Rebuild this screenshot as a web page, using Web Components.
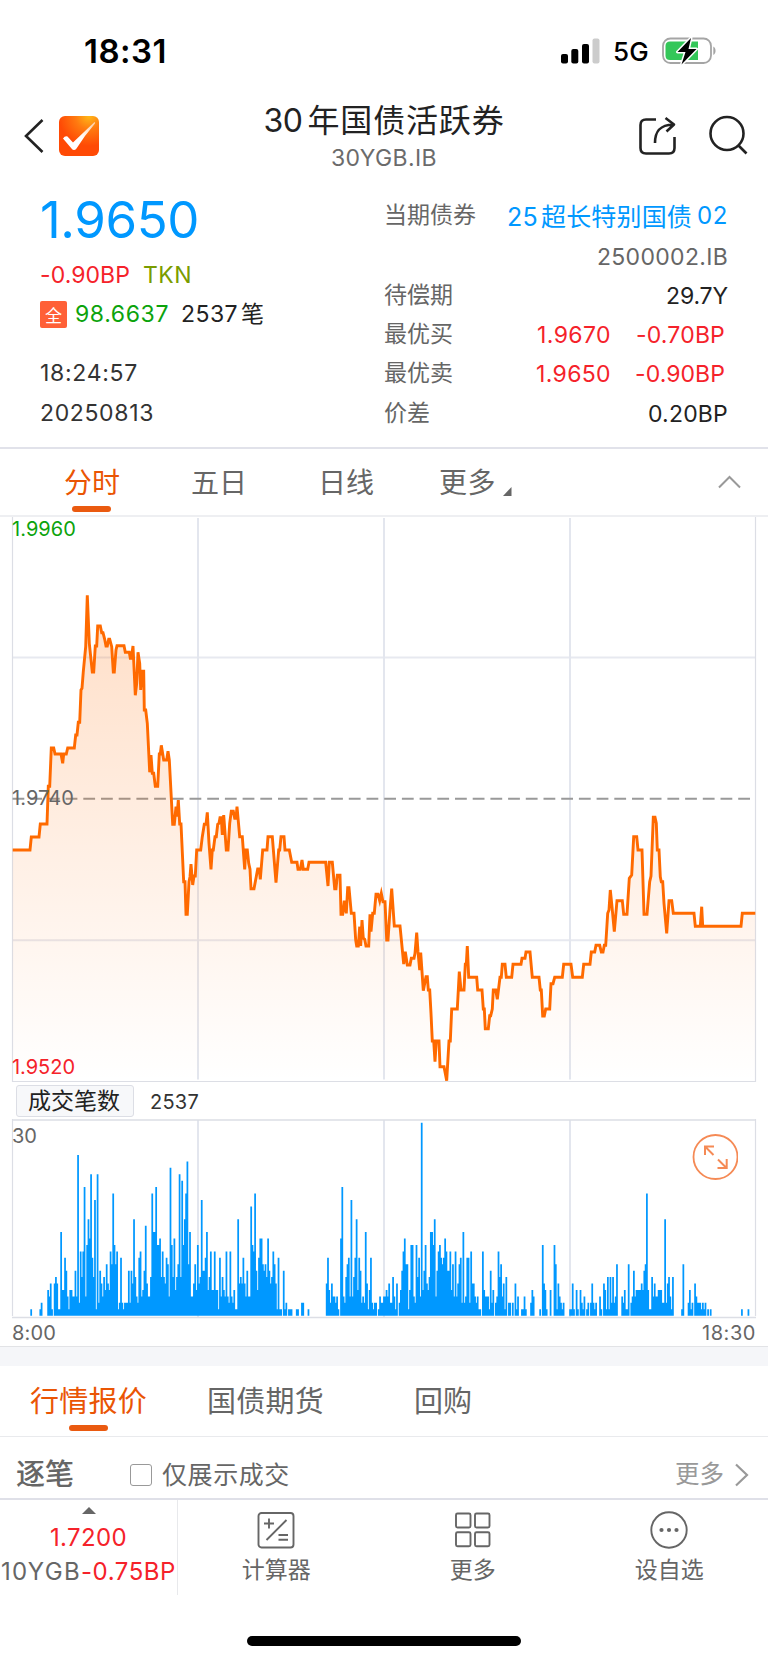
<!DOCTYPE html>
<html lang="zh-CN">
<head>
<meta charset="utf-8">
<title>30年国债活跃券</title>
<style>
html,body{margin:0;padding:0;background:#fff}
body{width:768px;height:1663px;overflow:hidden;font-family:Inter,"Noto Sans CJK SC",sans-serif;color:#222}
</style>
</head>
<body>
<bond-app></bond-app>
<script>
const define = (name, html, setup) => customElements.define(name, class extends HTMLElement {
  connectedCallback() {
    if (this.shadowRoot) return;
    const t = document.createElement('template');
    t.innerHTML = html;
    this.attachShadow({ mode: 'open' }).append(t.content.cloneNode(true));
    if (setup) setup(this, this.shadowRoot);
  }
});

define('bond-app', `
<style>:host{display:flex;flex-direction:column;width:768px;height:1663px;background:#fff;overflow:hidden}
.gap{height:19px;background:#f5f6f9;border-top:1px solid #e2e3e6;flex:none}</style>
<status-bar></status-bar>
<page-header></page-header>
<quote-summary></quote-summary>
<period-tabs></period-tabs>
<price-chart></price-chart>
<volume-head></volume-head>
<volume-chart></volume-chart>
<div class="gap"></div>
<market-tabs></market-tabs>
<tick-bar></tick-bar>
<bottom-bar></bottom-bar>
<home-indicator></home-indicator>`);

define('status-bar', `
<style>:host{display:flex;align-items:center;height:102px;flex:none;box-sizing:border-box;padding:0 52px 0 84px;color:#000}
.t{font-size:33px;font-weight:600;margin-right:auto;padding-top:1px}.g{font-size:26px;font-weight:450;margin:2px 13px 0 13px}svg{display:block;flex:none}</style>
<fit-text class="t" w="83">18:31</fit-text>
<svg width="40" height="26" viewBox="0 0 40 26"><rect x="1" y="16" width="7" height="9.5" rx="2"/><rect x="11.300" y="11" width="7" height="14.500" rx="2"/><rect x="22" y="6" width="7" height="19.500" rx="2"/><rect x="32.500" y="0.500" width="7" height="25" rx="2" fill="#ccc"/></svg>
<fit-text class="g" w="36">5G</fit-text>
<svg width="54" height="28" viewBox="0 0 54 28"><rect x="1" y="1.500" width="48" height="24.500" rx="7.500" fill="none" stroke="#a5a5a5" stroke-width="1.800"/><path d="M51.300 9.500c3 1.500 3 7 0 8.500z" fill="#a5a5a5"/><path d="M8 4.500h28v18.500H8q-4.500 0-4.500-4.500V9Q3.500 4.500 8 4.500z" fill="#34c759"/><path d="M29 1L15.500 15h8L19.500 27.500 34.500 12h-8z" fill="#000" stroke="#fff" stroke-width="3" paint-order="stroke" stroke-linejoin="round"/></svg>`);

define('page-header', `
<style>:host{display:grid;grid-template-columns:132px 1fr 132px;height:78px;flex:none;align-items:start}
.l{display:flex;padding:14px 0 0 22px;gap:14px}.c{display:flex;flex-direction:column;align-items:center;padding-top:1px}
.title{display:flex;height:37px;font-size:32px;gap:5px;align-items:center;color:#222}
.sub{font-size:23px;color:#6b6b6b;height:37px;display:flex;align-items:center}
.r{display:flex;gap:27px;padding:12px 0 0 0}svg{display:block;flex:none}</style>
<div class="l"><svg width="23" height="40" viewBox="0 0 23 40"><path d="M20.500 4L4 20 20.500 36" fill="none" stroke="#222" stroke-width="2.600"/></svg>
<svg width="40" height="40" viewBox="0 0 40 40"><defs><radialGradient id="o" cx=".75" cy="0" r=".75"><stop stop-color="#ffb918"/><stop offset=".45" stop-color="#ff7a10"/><stop offset="1" stop-color="#ff4a05"/></radialGradient><linearGradient id="w" x1="0" y1="1" x2="1" y2="0"><stop offset=".5" stop-color="#fff"/><stop offset="1" stop-color="#ffc99a"/></linearGradient></defs><rect width="40" height="40" rx="6" fill="url(#o)"/><path d="M4 22.500Q6 19.500 8.500 20.500L14 26.500Q25 16 35.500 6Q36.500 6 36 7.500Q26 19 17.500 32.500Q15 35.500 12.500 32.500Z" fill="url(#w)"/></svg></div>
<div class="c"><div class="title"><fit-text w="39">30</fit-text><fit-text w="197">年国债活跃券</fit-text></div><div class="sub"><fit-text w="106">30YGB.IB</fit-text></div></div>
<div class="r"><svg width="42" height="44" viewBox="0 0 42 44" fill="none" stroke="#222" stroke-width="2.600" stroke-linejoin="round"><path d="M20 5.500H10Q4.500 5.500 4.500 11V34Q4.500 39.500 10 39.500H33Q38.500 39.500 38.500 34V23"/><path d="M19 29C19 17 24 11 37 10.500M29.500 4L38 10.500 30.500 17.500"/></svg>
<svg width="44" height="44" viewBox="0 0 44 44" fill="none" stroke="#222" stroke-width="2.600"><circle cx="22" cy="19.500" r="16.500"/><path d="M33 31l8.500 8.500"/></svg></div>`);

define('quote-summary', `
<style>:host{display:grid;grid-template-columns:384px 344px;height:267px;flex:none;box-sizing:border-box;font-size:23px;color:#333}
.row{display:flex;align-items:center;height:39.4px}.price{height:80px;font-size:51px;color:#0098ff;display:flex;align-items:center;box-sizing:border-box}
.left{padding-left:40px}.red{color:#f5222a}.olive{color:#7a9c00;margin-left:13px}.green{color:#0ca30c;margin-left:8px}
.all{width:27px;height:27px;background:#ff6037;border-radius:2px;color:#fff;font-size:17px;display:flex;align-items:center;justify-content:center}
.n{color:#222;margin-left:12px}.bi{color:#222;margin-left:3px}
.right{padding-top:17px}.k{color:#666;margin-right:auto;position:relative;top:-1px}.link{color:#0098ff;font-size:25px}.dim{color:#666}.dark{color:#222}</style>
<div class="left">
<div class="price"><fit-text w="159">1.9650</fit-text></div>
<div class="row" style="margin-top:-4px;height:39px"><fit-text class="red" w="90">-0.90BP</fit-text><fit-text class="olive" w="49">TKN</fit-text></div>
<div class="row"><span class="all">全</span><fit-text class="green" w="94">98.6637</fit-text><fit-text class="n" w="57">2537</fit-text><fit-text class="bi" w="23">笔</fit-text></div>
<div class="row" style="margin-top:20px"><fit-text w="98">18:24:57</fit-text></div>
<div class="row"><fit-text w="114">20250813</fit-text></div>
</div>
<div class="right">
<div class="row"><fit-text class="k" w="92">当期债券</fit-text><fit-text class="link" w="31">25</fit-text><fit-text class="link" w="151" style="margin:0 5px 0 3px">超长特别国债</fit-text><fit-text class="link" w="31" style="font-size:24px">02</fit-text></div>
<div class="row" style="justify-content:flex-end;padding-top:2px"><fit-text class="dim" w="131">2500002.IB</fit-text></div>
<div class="row" style="margin-top:-1px"><fit-text class="k" w="69">待偿期</fit-text><fit-text class="dark" w="62">29.7Y</fit-text></div>
<div class="row"><fit-text class="k" w="69">最优买</fit-text><fit-text class="red" w="74">1.9670</fit-text><fit-text class="red" w="89" style="margin:0 3px 0 25px">-0.70BP</fit-text></div>
<div class="row"><fit-text class="k" w="69">最优卖</fit-text><fit-text class="red" w="75">1.9650</fit-text><fit-text class="red" w="90" style="margin:0 3px 0 24px">-0.90BP</fit-text></div>
<div class="row"><fit-text class="k" w="46">价差</fit-text><fit-text class="dark" w="80">0.20BP</fit-text></div>
</div>`);

define('tab-item', `
<style>:host{display:flex;flex-direction:column;align-items:center;flex:none;color:#666;height:100%;box-sizing:border-box;position:relative}
:host([active]){color:#ea5504}i{display:none;width:39px;height:6px;border-radius:3px;background:#ea5a10;position:absolute;bottom:var(--bar-bottom,3px)}
:host([active]) i{display:block}.t{height:100%;display:flex;align-items:center;padding-top:3px;box-sizing:border-box}</style><div class="t"><slot></slot></div><i></i>`);

define('period-tabs', `
<style>:host{display:flex;height:70px;flex:none;box-sizing:border-box;border-top:2px solid #e1e2ea;border-bottom:2px solid #eeeff2;font-size:28px;padding:0 27px 0 64px}
tab-item{margin-right:71px}svg{display:block;align-self:center}</style>
<tab-item active><fit-text w="56">分时</fit-text></tab-item><tab-item><fit-text w="56">五日</fit-text></tab-item><tab-item><fit-text w="56">日线</fit-text></tab-item>
<tab-item style="margin:0 7px 0 -6px"><fit-text w="57">更多</fit-text></tab-item>
<svg width="9" height="9" viewBox="0 0 9 9" style="margin-top:19px"><path d="M8.500 0V9H0z" fill="#666"/></svg>
<svg width="24" height="14" viewBox="0 0 24 14" style="margin-left:auto"><path d="M2 12.500L12.500 2 23 12.500" fill="none" stroke="#999" stroke-width="2"/></svg>`);

/* Price samples: each block has an origin in page pixels, samples are in thirds of a pixel. */
const PRICE = [
[0,510,'38,1020 90,1020 94,981 117,981 121,942 141,942 145,829 149,829 154,714 161,714 165,732 183,732 188,760 191,732 199,732 203,714 223,714 227,675 231,675 235,637 239,637 243,540 246,535 250,485 257,410 262,256 268,400 277,486 281,486 286,408 290,408 293,348 301,348 305,368 309,368 314,388 318,408 322,408 326,388 329,388 335,410 340,486 343,486 348,420 351,407 372,407 376,427 388,427 391,445 394,445 399,408 406,556 410,520 414,427 419,460 422,540 427,484 431,484 433,600 437,600 442,640 449,787 453,735 457,790 461,790 466,829 473,829 478,732 481,732 484,706 491,750 500,750 504,724 508,750 518,943 523,943 528,890 531,920 535,870 539,942 543,942 551,1115 555,1115 558,1213 562,1213 567,1115 570,1100 573,1062 578,1125 582,1098 586,1098 590,1020'],
[190,780,'32,210 37,170 43,133 48,133 52,97 57,190 63,268 67,210 70,210 75,170 79,170 83,133 87,130 90,113 94,113 97,165 101,105 109,210 114,210 119,130 124,94 130,94 134,115 138,115 141,80 149,170 157,170 164,268 167,210 172,210 176,250 180,268 183,326 192,326 203,267 208,267 211,298 218,210 231,210 234,170 247,170 258,308 266,210 269,210 273,170 282,170 285,210 298,210 305,247 321,247 324,268 331,268 336,240 340,268 353,268 357,247 407,247 414,318 418,247 427,247 434,326 438,326 442,286 450,286 453,403 458,403 463,362 469,400 473,323 477,323 484,400 492,400 497,480 500,498 505,498 509,440 512,498 516,420 520,475 524,478 528,498 536,498 540,403 543,455 548,400 553,400 558,343 564,343 569,362 574,340 579,365 585,365 590,480 594,480 600,390 605,326 613,438 630,438 635,490 641,552 646,515 652,555 660,555 664,535 672,535 675,520 680,458 684,515 689,570 692,518 700,632 708,590 712,590 715,630 719,630 723,700 727,783 731,783 735,845 739,783 747,783 750,860 762,860 770,902 777,783 781,783 785,687 802,687 808,575 813,630 822,630 826,553 829,553 832,498 836,592'],
[470,780,'20,592 23,630 36,630 40,687 43,687 46,746 55,746 59,707 62,707 67,687 70,630 77,630 82,658 90,592 94,592 97,553 105,553 109,592 125,592 129,553 153,553 156,535 165,535 168,516 180,516 187,592 207,592 211,630 214,630 218,708 223,708 227,687 239,687 243,611 249,611 254,592 277,592 281,553 303,553 308,592 337,592 341,553 360,553 364,516 374,516 378,496 389,496 394,516 399,516 403,496 407,496 413,400 417,390 421,330 426,380 433,455 441,362 457,362 461,403 471,403 478,295 485,285 491,170 500,170 504,210 516,210 522,403 531,403 539,305 543,288 550,112 555,112 559,130 562,210 567,210 571,290 574,305 578,305 582,370 590,460 597,362 605,362 610,400 672,400 676,439 691,439 695,380 698,439 813,439 817,400 856,400']];

define('price-chart', `
<style>:host{display:block;height:565px;flex:none;position:relative;font-size:20px}svg{display:block}
.l{position:absolute;left:12px;display:flex;align-items:center;height:24px}</style>
<svg width="768" height="565" viewBox="0 517 768 565"><defs><linearGradient id="f" gradientUnits="userSpaceOnUse" x1="0" y1="600" x2="0" y2="1081"><stop stop-color="#ff6a00" stop-opacity=".22"/><stop offset="1" stop-color="#ff6a00" stop-opacity="0"/></linearGradient></defs>
<g fill="none"><path d="M13 657.500H755M13 940.300H755" stroke="#e7e9f0" stroke-width="2"/><path d="M198 518V1079.500M384 518V1079.500M570 518V1079.500" stroke="#e3e6ee" stroke-width="2"/><path d="M12.500 517V1081.500H755.500V517" stroke="#dcdee5" stroke-width="1.200"/>
<path d="M12.500 798.700H755" stroke="#999" stroke-width="2" stroke-dasharray="11.800 5.900"/></g>
<path id="area" fill="url(#f)"/><path id="line" fill="none" stroke="#ff6a00" stroke-width="2.900" stroke-linejoin="miter" stroke-miterlimit="6"/></svg>
<div class="l" style="top:0;color:#0ca30c"><fit-text w="64">1.9960</fit-text></div>
<div class="l" style="top:269px;color:#666"><fit-text w="62">1.9740</fit-text></div>
<div class="l" style="top:538px;color:#f5222a"><fit-text w="63">1.9520</fit-text></div>`,
(host, root) => {
  const pts = PRICE.flatMap(([ox, oy, s]) => s.split(' ').map(p => {
    const [x, y] = p.split(',').map(Number);
    return (ox + x / 3).toFixed(1) + ' ' + (oy + y / 3).toFixed(1);
  }));
  root.getElementById('line').setAttribute('d', 'M' + pts.join('L'));
  root.getElementById('area').setAttribute('d', 'M12.700 1081L' + pts.join('L') + 'L755.300 1081Z');
});

define('volume-head', `
<style>:host{display:flex;align-items:center;height:37px;flex:none;padding-left:16px;color:#333;font-size:20px;gap:16px}
.b{width:116px;height:30px;border:1px solid #dcdee5;border-radius:3px;background:#f7f8fa;display:flex;align-items:center;justify-content:center;font-size:23px;color:#222}
fit-text{position:relative;top:1px}.b fit-text{left:-1px}</style>
<div class="b"><fit-text w="92">成交笔数</fit-text></div><fit-text w="49">2537</fit-text>`);

/* Deals per minute, 1.3 px per bar. */
const VOLUME = [
1,0,0,0,0,0,0,1,2,0,0,0,0,4,3,5,1,0,5,6,5,1,1,13,4,4,9,7,3,1,4,4,3,3,7,3,25,2,10,6,10,20,3,11,15,12,22,9,6,18,
1,22,2,7,5,3,6,4,8,5,4,10,8,19,11,8,10,1,2,9,2,1,2,2,2,7,2,7,5,15,6,3,2,9,10,3,4,7,14,5,3,3,6,19,13,13,20,11,11,12,
6,10,6,5,9,8,3,23,11,6,12,4,6,8,22,6,21,11,15,19,24,8,13,3,3,5,8,4,11,5,6,18,7,7,9,13,4,6,10,4,4,10,4,4,1,9,3,6,4,3,
10,3,2,10,3,2,4,1,1,15,5,6,5,9,5,3,7,3,3,17,11,10,19,7,4,9,12,12,8,7,8,6,12,7,5,6,10,8,5,1,9,1,1,0,7,1,2,0,1,1,
1,0,0,0,1,1,0,0,2,2,0,0,0,1,0,0,0,0,0,0,0,0,0,0,0,0,0,5,9,4,2,5,3,3,2,3,1,0,12,20,3,2,6,8,9,3,18,3,6,9,
15,4,9,7,2,3,2,13,5,1,4,9,2,1,2,2,0,1,3,2,2,3,3,4,3,5,2,2,6,3,1,5,0,2,4,7,10,12,8,8,1,4,11,11,3,2,11,6,9,3,
30,4,7,11,5,4,6,13,13,11,15,3,7,10,11,9,8,9,12,10,7,7,10,4,8,3,10,3,5,8,9,2,13,2,3,9,9,2,10,5,5,3,2,3,1,1,0,10,4,3,
3,3,1,7,2,4,0,2,3,10,6,8,3,5,1,6,0,2,2,0,2,0,5,1,3,0,0,1,1,3,1,0,0,0,2,4,3,0,0,0,0,1,0,11,5,4,1,0,0,4,
0,0,11,8,1,5,3,2,1,2,0,0,0,0,1,1,5,1,0,4,1,0,4,2,1,3,0,1,2,0,2,5,2,1,2,0,0,3,1,0,5,4,1,6,1,6,2,6,2,3,
8,0,0,0,3,2,4,1,1,8,0,2,3,7,3,4,4,4,4,5,4,7,8,19,4,1,1,6,3,5,3,3,4,4,4,2,2,15,2,5,6,3,1,6,0,0,0,0,0,0,
1,8,0,0,0,2,4,1,2,0,5,3,2,2,2,1,2,1,2,0,1,0,1,0,0,0,0,0,0,0,0,0,0,0,0,0,0,0,0,0,0,0,0,0,0,0,1,0,0,0,0,1];

define('volume-chart', `
<style>:host{display:block;height:227px;flex:none;position:relative;font-size:20px;color:#666}svg{display:block}
.m{position:absolute;left:12px;top:5px;height:24px;display:flex;align-items:center}.x{display:flex;justify-content:space-between;align-items:center;height:28px;padding:0 12px 0 12px}
.e{position:absolute;left:692px;top:15px}</style>
<svg width="768" height="200" viewBox="0 1119 768 200"><path d="M198 1120V1317M384 1120V1317M570 1120V1317" stroke="#e3e6ee" stroke-width="2"/><path d="M12.500 1316V1119M755.500 1316V1119" stroke="#dcdee5" stroke-width="1.200"/><path d="M12 1120H756M12 1317.500H756" stroke="#dcdee5" stroke-width="1.600"/><path id="bars" fill="#0098ff"/></svg>
<div class="m"><fit-text w="25">30</fit-text></div>
<svg class="e" width="46" height="46" viewBox="0 0 46 46" fill="none" stroke="#f58a55" stroke-width="1.800"><circle cx="23.500" cy="23" r="22"/><path d="M21.500 21L13 12.500M13 21V12.500H22M26 25.500l8.500 8.500M25.500 34H34.700V25" stroke-width="2"/></svg>
<div class="x"><fit-text w="44">8:00</fit-text><fit-text w="54">18:30</fit-text></div>`,
(host, root) => {
  const base = 1315.7, unit = 6.43, pitch = 1.3017, width = 1.75;
  const d = VOLUME.map((v, i) => v ? `M${(31 + i * pitch - width / 2 + .2).toFixed(2)} ${base}v${(-v * unit).toFixed(2)}h${width}V${base}z` : '').join('');
  root.getElementById('bars').setAttribute('d', d);
});

define('market-tabs', `
<style>:host{display:flex;height:71px;flex:none;box-sizing:border-box;border-bottom:1.500px solid #e9eaed;font-size:29px;padding-left:30px;--bar-bottom:5px}
tab-item{margin-right:60px}</style>
<tab-item active><fit-text w="117">行情报价</fit-text></tab-item><tab-item><fit-text w="117">国债期货</fit-text></tab-item><tab-item style="margin-left:30px"><fit-text w="58">回购</fit-text></tab-item>`);

define('tick-bar', `
<style>:host{display:flex;align-items:center;height:63px;flex:none;box-sizing:border-box;border-bottom:2px solid #dfe0e8;padding:15px 19px 0 16px;color:#666;font-size:25px}
.h{font-size:29px;font-weight:500;margin:1px 56px 0 0}.c{width:20px;height:20px;border:1.500px solid #999;border-radius:3px;margin-right:10px}.m{margin-left:auto;margin-right:10px;color:#999}</style>
<fit-text class="h" w="58">逐笔</fit-text><span class="c"></span><fit-text w="128">仅展示成交</fit-text><fit-text class="m" w="49" style="font-size:24.500px">更多</fit-text>
<svg width="15" height="24" viewBox="0 0 15 24"><path d="M2 1.500L13 12 2 22.500" fill="none" stroke="#999" stroke-width="2.200"/></svg>`);

define('nav-item', `
<style>:host{display:flex;flex-direction:column;align-items:center;padding-top:10px;gap:4px;font-size:23px;color:#666;flex:1}.t{height:34px;display:flex;align-items:center}</style>
<slot name="icon"></slot><div class="t"><slot></slot></div>`);

define('bottom-bar', `
<style>:host{display:grid;grid-template-columns:178px 1fr;height:95px;flex:none;font-size:24px;color:#666}
.q{border-right:1px solid #e8e9ec;display:flex;flex-direction:column;align-items:center;padding-top:7px;box-sizing:border-box}.q svg{display:block}
.r{display:flex;height:34px;align-items:center}.red{color:#f5222a}.n{display:flex}.n nav-item{flex:none;width:196.500px}svg{display:block}</style>
<div class="q"><svg width="14" height="8" viewBox="0 0 14 8"><path d="M7 0l7 7H0z" fill="#666"/></svg>
<div class="r red" style="margin-top:6px"><fit-text w="77">1.7200</fit-text></div><div class="r"><fit-text w="80">10YGB</fit-text><fit-text class="red" w="95">-0.75BP</fit-text></div></div>
<div class="n"><nav-item><svg slot="icon" width="38" height="40" viewBox="0 0 38 40" fill="none" stroke="#666" stroke-width="1.900"><rect x="1.500" y="3" width="35" height="34.500" rx="3"/><path d="M7 13.500h10M12 8.500v10M9.500 30L29.500 10M21.500 25h9.500M21.500 29.800h9.500"/></svg><fit-text w="69">计算器</fit-text></nav-item>
<nav-item><svg slot="icon" width="38" height="40" viewBox="0 0 38 40" fill="none" stroke="#666" stroke-width="1.900"><rect x="2" y="3.500" width="14.500" height="14" rx="1.500"/><rect x="21" y="3.500" width="14.500" height="14" rx="1.500"/><rect x="2" y="22.300" width="14.500" height="14" rx="1.500"/><rect x="21" y="22.300" width="14.500" height="14" rx="1.500"/></svg><fit-text w="46">更多</fit-text></nav-item>
<nav-item><svg slot="icon" width="38" height="40" viewBox="0 0 38 40" fill="none" stroke="#666" stroke-width="1.900"><circle cx="19" cy="20" r="17.700"/><g fill="#666" stroke="none"><circle cx="11.500" cy="20" r="2.100"/><circle cx="19" cy="20" r="2.100"/><circle cx="26.500" cy="20" r="2.100"/></g></svg><fit-text w="69">设自选</fit-text></nav-item></div>`);

define('home-indicator', `<style>:host{display:flex;justify-content:center;padding-top:41px}i{width:274px;height:10px;border-radius:5px;background:#000}</style><i></i>`);

/* Inline label whose tracking is adjusted so that it takes the given width. */
define('fit-text', `<style>:host{display:inline-block;flex:none;white-space:nowrap;line-height:1.2}span{display:inline-block}</style><span><slot></slot></span>`,
(host, root) => {
  const span = root.querySelector('span'), w = +host.getAttribute('w');
  const n = host.textContent.length;
  span.style.letterSpacing = ((w - span.getBoundingClientRect().width) / n).toFixed(3) + 'px';
});
</script>
</body>
</html>
